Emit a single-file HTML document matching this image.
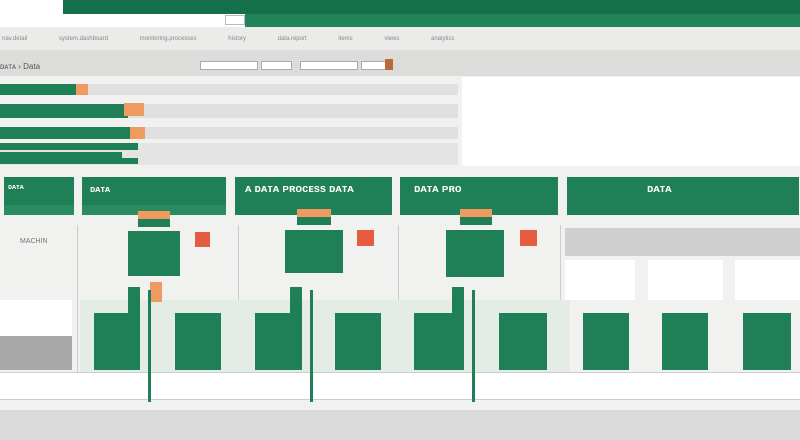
<!DOCTYPE html><html><head><style>
body{margin:0;width:800px;height:440px;overflow:hidden;background:#f1f1f0;font-family:"Liberation Sans",sans-serif;position:relative}
div{position:absolute;box-sizing:border-box}
.g{background:#1f7f56}.o{background:#ef9a5e}.w{background:#fff}.t{color:#fff;font-size:9px;font-weight:bold}
.l{width:1px;background:#ccc}
</style></head><body>
<div class="w" style="left:0;top:0;width:800px;height:27px"></div>
<div style="left:63px;top:0;width:737px;height:14px;background:#13704a"></div>
<div style="left:245px;top:14px;width:555px;height:13px;background:#1f8458"></div>
<div style="left:225px;top:15px;width:20px;height:10px;border:1px solid #bbb"></div>
<div style="left:0;top:27px;width:800px;height:23px;background:#ebebea;font-size:6px;color:#888;padding:9px 0 0 2px;word-spacing:30px">nav.detail system.dashboard monitoring.processes history data.report items views analytics</div>
<div style="left:0;top:50px;width:800px;height:26px;background:#dcdcdb"></div>
<div style="left:0;top:62px;font-size:8px;color:#555">ᴅᴀᴛᴀ › Data</div>
<div class="w" style="left:200px;top:61px;width:58px;height:9px;border:1px solid #aaa"></div>
<div class="w" style="left:261px;top:61px;width:31px;height:9px;border:1px solid #aaa"></div>
<div class="w" style="left:300px;top:61px;width:58px;height:9px;border:1px solid #aaa"></div>
<div style="left:361px;top:61px;width:31px;height:9px;border:1px solid #aaa;background:#fff"></div>
<div style="left:385px;top:59px;width:8px;height:11px;background:#b86a3a"></div>
<div style="left:0;top:84px;width:458px;height:11px;background:#e0e0e0"></div>
<div style="left:0;top:104px;width:458px;height:14px;background:#e0e0e0"></div>
<div style="left:0;top:127px;width:458px;height:12px;background:#e0e0e0"></div>
<div style="left:0;top:143px;width:458px;height:22px;background:#e4e4e4"></div>
<div class="g" style="left:0;top:84px;width:78px;height:11px"></div><div class="o" style="left:76px;top:84px;width:12px;height:11px"></div>
<div class="g" style="left:0;top:104px;width:128px;height:14px"></div><div class="o" style="left:124px;top:103px;width:20px;height:13px"></div>
<div class="g" style="left:0;top:127px;width:131px;height:12px"></div><div class="o" style="left:130px;top:127px;width:15px;height:12px"></div>
<div class="g" style="left:0;top:143px;width:138px;height:7px"></div>
<div class="g" style="left:0;top:152px;width:122px;height:6px"></div>
<div class="g" style="left:0;top:158px;width:138px;height:6px"></div>
<div class="w" style="left:462px;top:77px;width:338px;height:89px"></div>
<div class="g t" style="left:4px;top:177px;width:70px;height:38px;padding:7px 4px;font-size:7px;border-bottom:10px solid #2a8a60">ᴅᴀᴛᴀ</div>
<div class="g t" style="left:82px;top:177px;width:144px;height:38px;padding:7px 8px;border-bottom:10px solid #2a8a60">ᴅᴀᴛᴀ</div>
<div class="g t" style="left:235px;top:177px;width:157px;height:38px;padding:6px 10px;font-size:11px">ᴀ ᴅᴀᴛᴀ ᴘʀᴏᴄᴇss ᴅᴀᴛᴀ</div>
<div class="g t" style="left:400px;top:177px;width:158px;height:38px;padding:6px 14px;font-size:11px">ᴅᴀᴛᴀ ᴘʀᴏ</div>
<div class="g t" style="left:567px;top:177px;width:232px;height:38px;padding:6px 80px;font-size:11px">ᴅᴀᴛᴀ</div>
<div style="left:20px;top:238px;font-size:7px;color:#777">MACHIN</div>
<div class="l" style="left:77px;top:225px;height:150px"></div>
<div class="l" style="left:238px;top:225px;height:150px"></div>
<div class="l" style="left:398px;top:225px;height:150px"></div>
<div class="l" style="left:560px;top:225px;height:150px"></div>
<div class="w" style="left:0;top:300px;width:72px;height:36px"></div>
<div style="left:0;top:336px;width:72px;height:34px;background:#a9a9a9"></div>
<div style="left:565px;top:228px;width:235px;height:28px;background:#cfcfcf"></div>
<div class="w" style="left:565px;top:260px;width:70px;height:40px"></div><div class="w" style="left:648px;top:260px;width:75px;height:40px"></div><div class="w" style="left:735px;top:260px;width:65px;height:40px"></div>
<div class="g" style="left:128px;top:231px;width:52px;height:45px"></div>
<div class="o" style="left:138px;top:211px;width:32px;height:9px"></div><div class="g" style="left:138px;top:219px;width:32px;height:8px"></div>
<div class="g" style="left:285px;top:230px;width:58px;height:43px"></div>
<div class="o" style="left:297px;top:209px;width:34px;height:9px"></div><div class="g" style="left:297px;top:217px;width:34px;height:8px"></div>
<div class="g" style="left:446px;top:230px;width:58px;height:47px"></div>
<div class="o" style="left:460px;top:209px;width:32px;height:9px"></div><div class="g" style="left:460px;top:217px;width:32px;height:8px"></div>
<div style="left:195px;top:232px;width:15px;height:15px;background:#e55b3f"></div>
<div style="left:357px;top:230px;width:17px;height:16px;background:#e55b3f"></div>
<div style="left:520px;top:230px;width:17px;height:16px;background:#e55b3f"></div>
<div style="left:80px;top:300px;width:490px;height:72px;background:#e4ece6"></div>
<div class="g" style="left:94px;top:313px;width:46px;height:57px"></div>
<div class="g" style="left:175px;top:313px;width:46px;height:57px"></div>
<div class="g" style="left:255px;top:313px;width:46px;height:57px"></div>
<div class="g" style="left:335px;top:313px;width:46px;height:57px"></div>
<div class="g" style="left:414px;top:313px;width:48px;height:57px"></div>
<div class="g" style="left:499px;top:313px;width:48px;height:57px"></div>
<div class="g" style="left:583px;top:313px;width:46px;height:57px"></div>
<div class="g" style="left:662px;top:313px;width:46px;height:57px"></div>
<div class="g" style="left:743px;top:313px;width:48px;height:57px"></div>
<div class="g" style="left:128px;top:287px;width:12px;height:83px"></div>
<div class="g" style="left:290px;top:287px;width:12px;height:83px"></div>
<div class="g" style="left:452px;top:287px;width:12px;height:83px"></div>
<div class="o" style="left:150px;top:282px;width:12px;height:20px"></div>
<div class="w" style="left:0;top:372px;width:800px;height:28px;border-top:1px solid #ccc;border-bottom:1px solid #ccc"></div>
<div class="g" style="left:148px;top:290px;width:3px;height:112px"></div>
<div class="g" style="left:310px;top:290px;width:3px;height:112px"></div>
<div class="g" style="left:472px;top:290px;width:3px;height:112px"></div>
<div style="left:0;top:410px;width:800px;height:30px;background:#dadada"></div>
</body></html>
